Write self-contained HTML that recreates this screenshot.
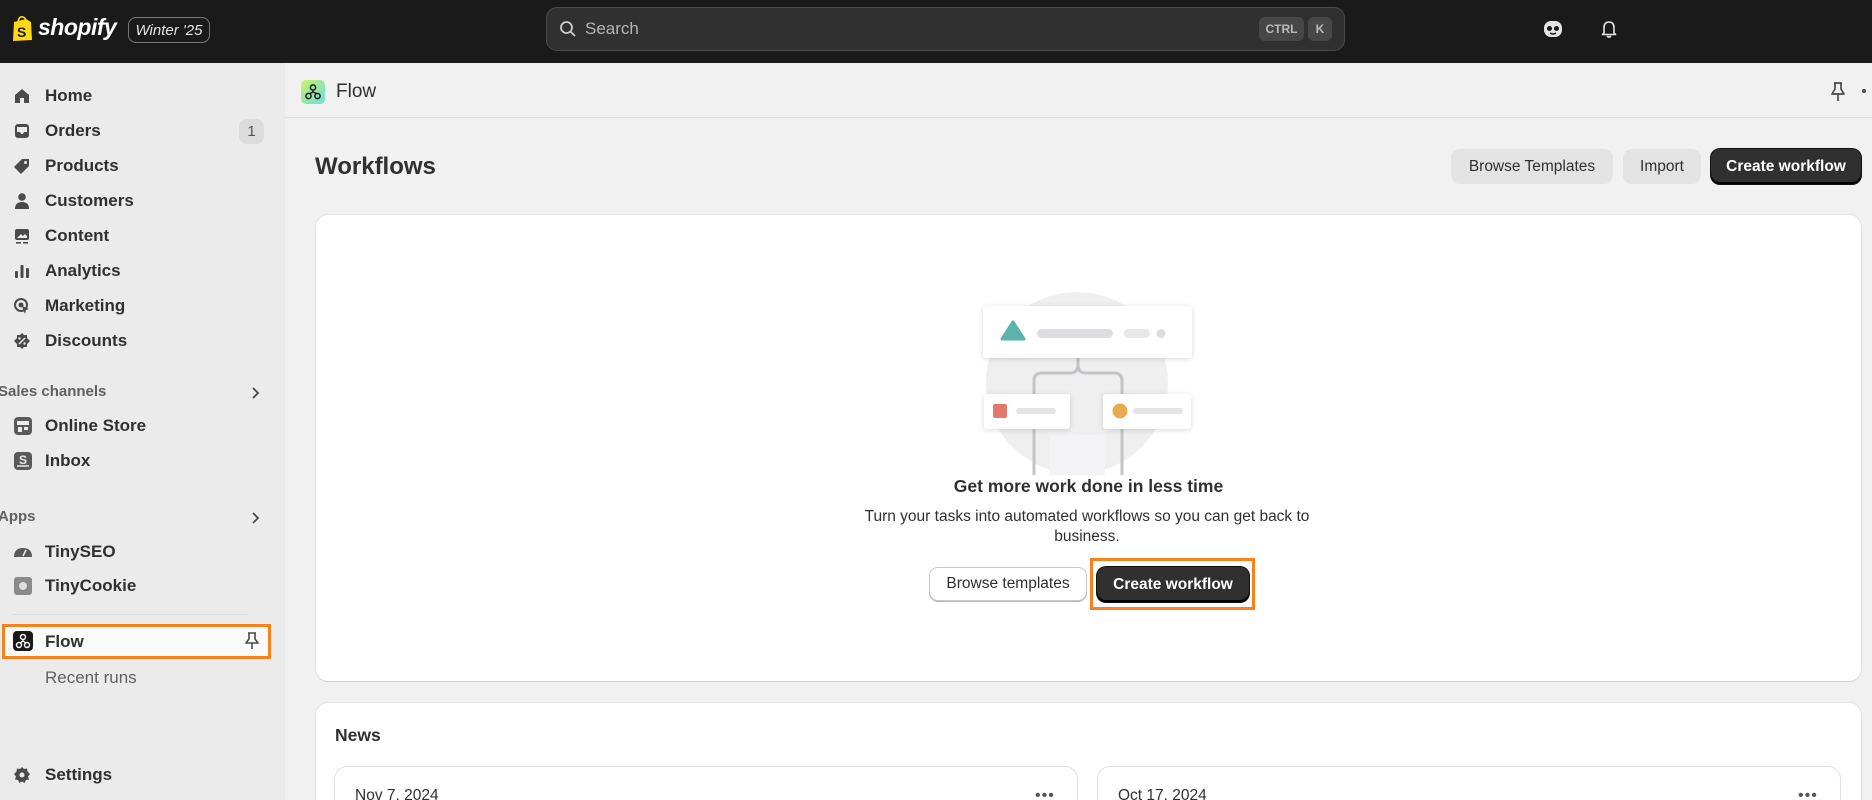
<!DOCTYPE html>
<html style="overflow:hidden;width:1872px;height:800px"><head><meta charset="utf-8"><style>
*{box-sizing:border-box;margin:0;padding:0}
body{width:1872px;height:800px;overflow:hidden;font-family:"Liberation Sans",sans-serif;background:#f1f1f1;position:relative;color:#303030}
#wrap{position:absolute;left:0;top:0;width:1872px;height:800px;overflow:hidden}
.a{position:absolute}
#top{left:0;top:0;width:1872px;height:63px;background:#1a1a1a}
#side{left:0;top:63px;width:285px;height:737px;background:#ebebeb}
.nav{position:absolute;left:45px;font-size:17px;font-weight:bold;color:#303030;line-height:20px}
.ic{position:absolute;left:13px;width:18px;height:18px}
.sec{position:absolute;left:-2px;font-size:15px;font-weight:bold;color:#616161}
.btn{position:absolute;border-radius:9px;font-size:15.5px;font-weight:bold;display:flex;align-items:center;justify-content:center}
.card{position:absolute;background:#fff;border-radius:12px;box-shadow:0 1px 0 #d4d4d4,0 0 0 1px #e3e3e3}
</style></head><body><div id="wrap">
<div id="top" class="a"></div>
<svg class="a" style="left:11px;top:16px" width="23" height="26" viewBox="0 0 23 26"><path d="M3 6 L15 3 L20 6 L21 24 L2 25 Z" fill="#ffd916"/><path d="M7 6 Q8 0 12 1 Q15 2 15 5" fill="none" stroke="#ffd916" stroke-width="1.6"/><text x="6" y="21" font-size="14" font-weight="bold" fill="#1a1a1a" font-family="Liberation Sans">S</text></svg>
<div class="a" style="left:38px;top:14px;color:#fff;font-size:23px;font-weight:bold;font-style:italic;letter-spacing:-0.5px">shopify</div>
<div class="a" style="left:128px;top:17px;width:82px;height:26px;border:1px solid #777;border-radius:8px;color:#e3e3e3;font-size:15px;font-style:italic;display:flex;align-items:center;justify-content:center">Winter '25</div>
<div class="a" style="left:546px;top:7px;width:799px;height:44px;border-radius:11px;background:#303030;border:1px solid #4a4a4a"></div>
<svg class="a" style="left:559px;top:20px" width="18" height="18" viewBox="0 0 18 18"><circle cx="7.5" cy="7.5" r="5.5" fill="none" stroke="#ccc" stroke-width="1.8"/><path d="M11.5 11.5 L16 16" stroke="#ccc" stroke-width="1.8"/></svg>
<div class="a" style="left:585px;top:19px;color:#b5b5b5;font-size:17px">Search</div>
<div class="a" style="left:1259px;top:17px;width:45px;height:24px;border-radius:6px;background:#474747;color:#bbb;font-size:12px;font-weight:bold;display:flex;align-items:center;justify-content:center">CTRL</div>
<div class="a" style="left:1308px;top:17px;width:24px;height:24px;border-radius:6px;background:#474747;color:#bbb;font-size:12px;font-weight:bold;display:flex;align-items:center;justify-content:center">K</div>
<svg class="a" style="left:1543px;top:19px" width="20" height="20" viewBox="0 0 20 20"><rect x="1" y="2" width="18" height="16" rx="7" fill="#e3e3e3"/><circle cx="6.5" cy="9.5" r="2.5" fill="#1a1a1a"/><circle cx="13.5" cy="9.5" r="2.5" fill="#1a1a1a"/><path d="M7 14 Q10 16 13 14" stroke="#1a1a1a" stroke-width="1.5" fill="none"/></svg>
<svg class="a" style="left:1599px;top:19px" width="20" height="20" viewBox="0 0 20 20"><path d="M5 14 V9 Q5 3 10 3 Q15 3 15 9 V14 L16.5 15.5 H3.5 Z" fill="none" stroke="#e3e3e3" stroke-width="1.6" stroke-linejoin="round"/><path d="M8 17 Q10 19 12 17" stroke="#e3e3e3" stroke-width="1.6" fill="none"/></svg>

<div id="side" class="a"></div>
<svg class="ic" style="top:87px" viewBox="0 0 18 18"><path d="M2 8 L9 2 L16 8 V16 H11 V11 H7 V16 H2 Z" fill="#4a4a4a"/></svg>
<div class="nav" style="top:86px">Home</div>
<svg class="ic" style="top:122px" viewBox="0 0 18 18"><rect x="2" y="2" width="14" height="14" rx="3" fill="#4a4a4a"/><path d="M4 10 H7 L8 12 H10 L11 10 H14 V5 H4 Z" fill="#ebebeb"/></svg>
<div class="nav" style="top:121px">Orders</div>
<div class="a" style="left:239px;top:119px;width:25px;height:25px;border-radius:8px;background:#dcdcdc;font-size:15px;color:#555;display:flex;align-items:center;justify-content:center">1</div>
<svg class="ic" style="top:157px" viewBox="0 0 18 18"><path d="M9 2 H16 V9 L8 17 L1 10 Z" fill="#4a4a4a"/><circle cx="12.5" cy="5.5" r="1.5" fill="#ebebeb"/></svg>
<div class="nav" style="top:156px">Products</div>
<svg class="ic" style="top:192px" viewBox="0 0 18 18"><circle cx="9" cy="5" r="3.8" fill="#4a4a4a"/><path d="M2 17 Q2 10 9 10 Q16 10 16 17 Z" fill="#4a4a4a"/></svg>
<div class="nav" style="top:191px">Customers</div>
<svg class="ic" style="top:227px" viewBox="0 0 18 18"><rect x="2" y="2" width="14" height="11" rx="2" fill="#4a4a4a"/><path d="M4 11 L8 7 L10 9 L12 7 L14 9 V11Z" fill="#ebebeb"/><rect x="3" y="15" width="5" height="1.6" fill="#4a4a4a"/><rect x="10" y="15" width="5" height="1.6" fill="#4a4a4a"/></svg>
<div class="nav" style="top:226px">Content</div>
<svg class="ic" style="top:262px" viewBox="0 0 18 18"><rect x="2" y="9" width="3" height="7" rx="1" fill="#4a4a4a"/><rect x="7.5" y="3" width="3" height="13" rx="1" fill="#4a4a4a"/><rect x="13" y="6" width="3" height="10" rx="1" fill="#4a4a4a"/></svg>
<div class="nav" style="top:261px">Analytics</div>
<svg class="ic" style="top:297px" viewBox="0 0 18 18"><circle cx="8" cy="8" r="6" fill="none" stroke="#4a4a4a" stroke-width="2"/><circle cx="8" cy="8" r="2.5" fill="#4a4a4a"/><path d="M9 9 L16 12 L13 13 L12 17 Z" fill="#4a4a4a"/></svg>
<div class="nav" style="top:296px">Marketing</div>
<svg class="ic" style="top:332px" viewBox="0 0 18 18"><path d="M9 1 L11 3 L14 3 L14 6 L17 9 L14 12 L14 15 L11 15 L9 17 L7 15 L4 15 L4 12 L1 9 L4 6 L4 3 L7 3 Z" fill="#4a4a4a"/><path d="M6 12 L12 6" stroke="#ebebeb" stroke-width="1.5"/><circle cx="6.5" cy="6.5" r="1.2" fill="#ebebeb"/><circle cx="11.5" cy="11.5" r="1.2" fill="#ebebeb"/></svg>
<div class="nav" style="top:331px">Discounts</div>
<div class="sec" style="top:383px">Sales channels</div>
<svg class="a" style="left:250px;top:386px" width="12" height="14" viewBox="0 0 12 14"><path d="M3 2 L8 7 L3 12" stroke="#4a4a4a" stroke-width="1.8" fill="none"/></svg>
<svg class="ic" style="top:416px;width:20px;height:20px" viewBox="0 0 20 20"><rect x="1" y="1" width="18" height="18" rx="4" fill="#5a5a5a"/><rect x="4" y="5" width="12" height="4" fill="#ebebeb"/><rect x="5" y="11" width="4" height="5" fill="#ebebeb"/><rect x="11" y="11" width="4" height="3" fill="#ebebeb"/></svg>
<div class="nav" style="top:416px">Online Store</div>
<svg class="ic" style="top:451px;width:20px;height:20px" viewBox="0 0 20 20"><rect x="1" y="1" width="18" height="18" rx="4" fill="#5a5a5a"/><text x="6" y="13" font-size="12" font-weight="bold" fill="#ebebeb" font-family="Liberation Sans">S</text><path d="M4 15 H16" stroke="#ebebeb" stroke-width="1.5"/></svg>
<div class="nav" style="top:451px">Inbox</div>
<div class="sec" style="top:508px">Apps</div>
<svg class="a" style="left:250px;top:511px" width="12" height="14" viewBox="0 0 12 14"><path d="M3 2 L8 7 L3 12" stroke="#4a4a4a" stroke-width="1.8" fill="none"/></svg>
<svg class="ic" style="top:545px;width:20px;height:14px" viewBox="0 0 20 14"><path d="M1 12 Q1 3 10 3 Q19 3 19 12 Z" fill="#5a5a5a"/><path d="M10 11 L13 5" stroke="#ebebeb" stroke-width="1.6"/></svg>
<div class="nav" style="top:542px">TinySEO</div>
<svg class="ic" style="top:576px;width:20px;height:20px" viewBox="0 0 20 20"><rect x="1" y="1" width="18" height="18" rx="3" fill="#8a8a8a"/><circle cx="10" cy="10" r="4" fill="#ddd"/></svg>
<div class="nav" style="top:576px">TinyCookie</div>
<div class="a" style="left:12px;top:614px;width:236px;height:1px;background:#dcdcdc"></div>
<div class="a" style="left:2px;top:624px;width:269px;height:35px;border:3px solid #f5821f;background:#fafafa"></div>
<svg class="ic" style="top:631px;width:20px;height:20px" viewBox="0 0 20 20"><rect x="0" y="0" width="20" height="20" rx="4" fill="#1a1a1a"/><circle cx="10" cy="6" r="2.5" fill="none" stroke="#fff" stroke-width="1.4"/><circle cx="6" cy="14" r="2.5" fill="none" stroke="#fff" stroke-width="1.4"/><circle cx="14" cy="14" r="2.5" fill="none" stroke="#fff" stroke-width="1.4"/><path d="M10 8.5 V10 L7 12 M10 10 L13 12" stroke="#fff" stroke-width="1.3" fill="none"/></svg>
<div class="nav" style="top:632px">Flow</div>
<svg class="a" style="left:243px;top:631px" width="18" height="20" viewBox="0 0 18 20"><path d="M5 2 H13 M6 2 V8 L3 12 H15 L12 8 V2 M9 12 V18" stroke="#4a4a4a" stroke-width="1.6" fill="none" stroke-linejoin="round"/></svg>
<div class="nav" style="top:668px;font-weight:normal;color:#616161">Recent runs</div>
<svg class="ic" style="top:766px" viewBox="0 0 18 18"><path d="M9 1 L11 3 L14 2.5 L14.5 5.5 L17 8 L15 10.5 L16 13.5 L13 14 L11.5 17 L9 15.5 L6.5 17 L5 14 L2 13.5 L3 10.5 L1 8 L3.5 5.5 L4 2.5 L7 3 Z" fill="#4a4a4a"/><circle cx="9" cy="9" r="2.5" fill="#ebebeb"/></svg>
<div class="nav" style="top:765px">Settings</div>

<div class="a" style="left:285px;top:117px;width:1587px;height:1px;background:#e1e1e1"></div>
<svg class="a" style="left:301px;top:80px" width="24" height="24" viewBox="0 0 24 24"><defs><linearGradient id="g" x1="0" y1="0" x2="1" y2="1"><stop offset="0" stop-color="#c6f36b"/><stop offset="1" stop-color="#6fdbe0"/></linearGradient></defs><rect width="24" height="24" rx="5" fill="url(#g)"/><circle cx="12" cy="7.5" r="2.6" fill="none" stroke="#1a1a1a" stroke-width="1.5"/><circle cx="7.5" cy="16" r="2.6" fill="none" stroke="#1a1a1a" stroke-width="1.5"/><circle cx="16.5" cy="16" r="2.6" fill="none" stroke="#1a1a1a" stroke-width="1.5"/><path d="M12 10 V12 L8.5 13.5 M12 12 L15.5 13.5" stroke="#1a1a1a" stroke-width="1.4" fill="none"/></svg>
<div class="a" style="left:336px;top:81px;font-size:19px;color:#303030">Flow</div>
<svg class="a" style="left:1829px;top:81px" width="18" height="22" viewBox="0 0 18 22"><path d="M5 2 H13 M6 2 V8 L3 13 H15 L12 8 V2 M9 13 V20" stroke="#4a4a4a" stroke-width="1.7" fill="none" stroke-linejoin="round"/></svg>
<div class="a" style="left:1862px;top:89px;width:4px;height:4px;border-radius:2px;background:#4a4a4a"></div>

<div class="a" style="left:315px;top:153px;font-size:24px;font-weight:bold;color:#303030">Workflows</div>
<div class="btn" style="left:1451px;top:149px;width:162px;height:35px;background:#e3e3e3;color:#303030;font-weight:normal">Browse Templates</div>
<div class="btn" style="left:1623px;top:149px;width:78px;height:35px;background:#e3e3e3;color:#303030;font-weight:normal">Import</div>
<div class="btn" style="left:1711px;top:149px;width:150px;height:35px;background:#303030;color:#fff;box-shadow:inset 0 -2px 0 #000,0 0 0 1px #111">Create workflow</div>

<div class="card" style="left:316px;top:215px;width:1545px;height:466px"></div>
<svg class="a" style="left:970px;top:285px" width="240" height="190" viewBox="0 0 240 190"><circle cx="107" cy="98" r="91" fill="#efeff0"/><path d="M108 70 V80 Q108 88 100 88 H72 Q64 88 64 96 V190 M108 80 Q108 88 116 88 H144 Q152 88 152 96 V190" stroke="#c4c4c8" stroke-width="3" fill="none"/><rect x="80" y="150" width="55" height="40" fill="#f3f3f5"/><rect x="13" y="21" width="209" height="52" rx="3" fill="#fff" style="filter:drop-shadow(0 1px 3px rgba(0,0,0,.15))"/><path d="M43 37 L54 54 H32 Z" fill="#5bb3ab" stroke="#5bb3ab" stroke-width="3" stroke-linejoin="round"/><rect x="67" y="44" width="76" height="9" rx="4.5" fill="#dcdde0"/><rect x="154" y="44" width="26" height="9" rx="4.5" fill="#e6e7e9"/><circle cx="191" cy="48.5" r="4.5" fill="#dcdde0"/><rect x="14" y="109" width="86" height="35" rx="3" fill="#fff" style="filter:drop-shadow(0 1px 3px rgba(0,0,0,.15))"/><rect x="23" y="119" width="14" height="14" rx="2" fill="#e27a6c"/><rect x="46" y="123" width="40" height="6" rx="3" fill="#e3e4e6"/><rect x="133" y="109" width="88" height="35" rx="3" fill="#fff" style="filter:drop-shadow(0 1px 3px rgba(0,0,0,.15))"/><circle cx="150" cy="126" r="7.5" fill="#e8aa4c"/><rect x="163" y="123" width="50" height="6" rx="3" fill="#e3e4e6"/></svg>
<div class="a" style="left:316px;top:476px;width:1545px;text-align:center;font-size:17.5px;font-weight:bold;color:#303030">Get more work done in less time</div>
<div class="a" style="left:850px;top:507px;width:474px;text-align:center;font-size:15.5px;line-height:20px;color:#303030">Turn your tasks into automated workflows so you can get back to business.</div>
<div class="btn" style="left:929px;top:567px;width:158px;height:34px;background:#fff;border:1px solid #c9c9c9;box-shadow:0 1px 0 #bbb;color:#303030;font-weight:normal">Browse templates</div>
<div class="a" style="left:1090px;top:558px;width:165px;height:52px;border:3px solid #f5821f"></div>
<div class="btn" style="left:1097px;top:567px;width:152px;height:35px;background:#303030;color:#fff;box-shadow:inset 0 -2px 0 #000,0 0 0 1px #111">Create workflow</div>

<div class="card" style="left:316px;top:703px;width:1545px;height:120px"></div>
<div class="a" style="left:335px;top:725px;font-size:17.5px;font-weight:bold;color:#303030">News</div>
<div class="card" style="left:335px;top:767px;width:742px;height:60px;box-shadow:0 0 0 1px #e1e1e1"></div>
<div class="card" style="left:1098px;top:767px;width:742px;height:60px;box-shadow:0 0 0 1px #e1e1e1"></div>
<div class="a" style="left:355px;top:787px;font-size:15.5px;color:#303030">Nov 7, 2024</div>
<div class="a" style="left:1118px;top:787px;font-size:15.5px;color:#303030">Oct 17, 2024</div>
<div class="a" style="left:1035px;top:787px;font-size:16px;color:#555;letter-spacing:1px">•••</div>
<div class="a" style="left:1798px;top:787px;font-size:16px;color:#555;letter-spacing:1px">•••</div>
</div></body></html>
